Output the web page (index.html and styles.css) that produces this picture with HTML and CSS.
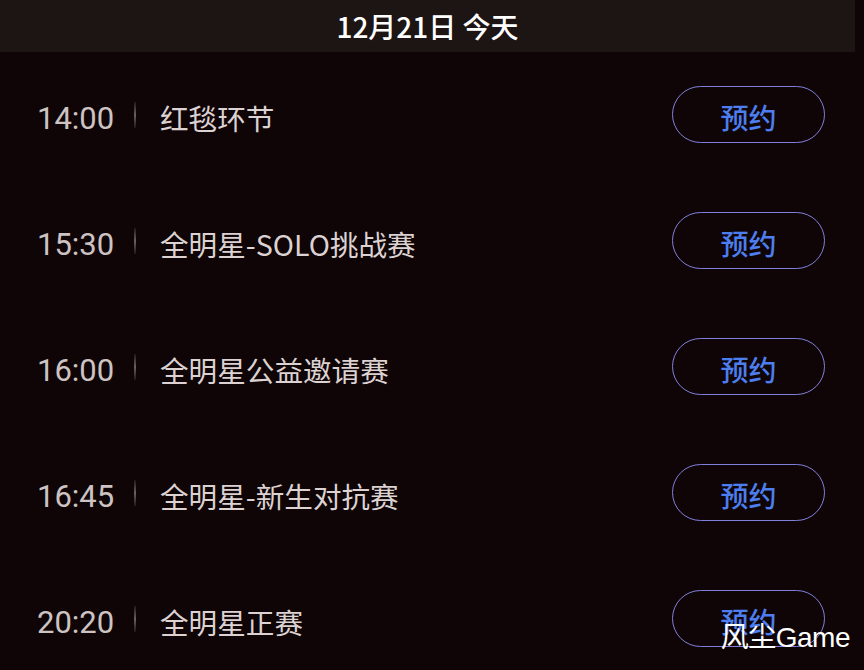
FILE: index.html
```html
<!DOCTYPE html>
<html lang="zh-CN">
<head>
    <meta charset="UTF-8">
    <meta name="viewport" content="width=device-width, initial-scale=1.0">
    <title>赛程</title>
    <link rel="stylesheet" href="styles.css">
</head>
<body>
    <div class="page">
        <!-- Date header -->
        <div class="date-bar">12月21日 今天</div>

        <!-- Schedule list -->
        <ul class="schedule">
            <li class="item">
                <span class="time">14:00</span>
                <span class="divider"></span>
                <span class="title">红毯环节</span>
                <button class="book-button">预约</button>
            </li>
            <li class="item">
                <span class="time">15:30</span>
                <span class="divider"></span>
                <span class="title">全明星-SOLO挑战赛</span>
                <button class="book-button">预约</button>
            </li>
            <li class="item">
                <span class="time">16:00</span>
                <span class="divider"></span>
                <span class="title">全明星公益邀请赛</span>
                <button class="book-button">预约</button>
            </li>
            <li class="item">
                <span class="time">16:45</span>
                <span class="divider"></span>
                <span class="title">全明星-新生对抗赛</span>
                <button class="book-button">预约</button>
            </li>
            <li class="item">
                <span class="time">20:20</span>
                <span class="divider"></span>
                <span class="title">全明星正赛</span>
                <button class="book-button">预约</button>
            </li>
        </ul>

        <div class="watermark">风尘Game</div>
    </div>
</body>
</html>
```

FILE: styles.css
```css
/* Basic Reset */
* {
    margin: 0;
    padding: 0;
    box-sizing: border-box;
}

body {
    background-color: #0f0506;
    font-family: "Noto Sans CJK SC", "Noto Sans", sans-serif;
    overflow: hidden;
}

.page {
    position: relative;
    width: 864px;
    height: 670px;
    overflow: hidden;
}

/* Header */
.date-bar {
    height: 52px;
    margin-right: 9px;
    background-color: #1d1414;
    color: #ffffff;
    font-size: 28px;
    font-weight: 500;
    line-height: 52px;
    text-align: center;
}

/* List */
.schedule {
    list-style: none;
    margin-top: 2px;
}

.item {
    display: flex;
    align-items: center;
    height: 126px;
    padding: 0 39px 0 37px;
}

.time {
    width: 97px;
    font-family: Roboto, "Liberation Sans", sans-serif;
    font-size: 31px;
    color: #cdc3c3;
    position: relative;
    top: 1px;
}

.divider {
    width: 2px;
    height: 26px;
    margin-top: -4px;
    background: linear-gradient(to bottom, rgba(100, 90, 90, 0.2), #6a6060, rgba(100, 90, 90, 0.2));
}

.title {
    margin-left: 24px;
    font-size: 28.6px;
    color: #dcd2d2;
}

/* Book button */
.book-button {
    margin-left: auto;
    margin-top: -5px;
    width: 153px;
    height: 57px;
    border: 1.5px solid #8080dc;
    border-radius: 29px;
    background: transparent;
    color: #4d7eef;
    font-family: "Noto Sans CJK SC", sans-serif;
    font-size: 28px;
    font-weight: 500;
    cursor: pointer;
    padding-top: 4px;
}

/* Watermark */
.watermark {
    position: absolute;
    right: 14px;
    bottom: 15px;
    color: #ffffff;
    font-family: "Liberation Sans", "Noto Sans CJK SC", sans-serif;
    font-size: 28px;
    letter-spacing: -0.5px;
}
```
